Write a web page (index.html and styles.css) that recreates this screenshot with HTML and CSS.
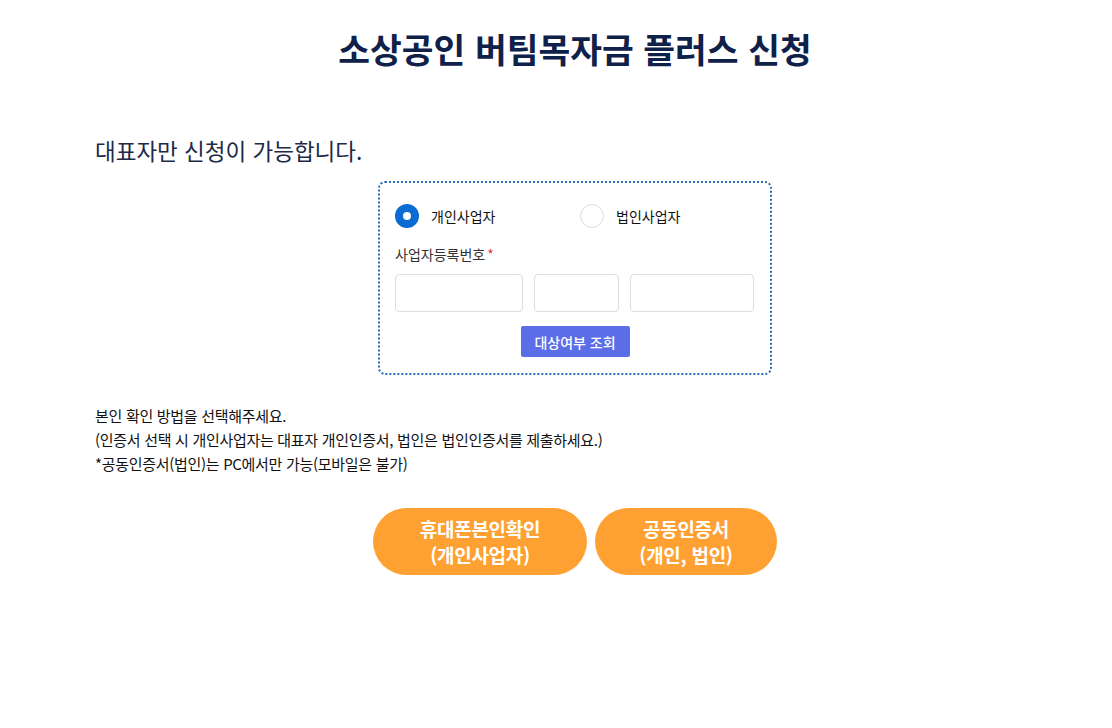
FILE: index.html
```html
<!DOCTYPE html>
<html lang="ko">
<head>
<meta charset="utf-8">
<link rel="stylesheet" href="styles.css">
</head>
<body>
<div class="page">
  <h1 class="title">소상공인 버팀목자금 플러스 신청</h1>
  <p class="notice">대표자만 신청이 가능합니다.</p>
  <div class="box">
    <div class="radios">
      <label class="radio"><span class="dot on"></span><span>개인사업자</span></label>
      <label class="radio"><span class="dot"></span><span>법인사업자</span></label>
    </div>
    <div class="field-label">사업자등록번호<span class="req">*</span></div>
    <div class="inputs">
      <span class="inp w1"></span>
      <span class="inp w2"></span>
      <span class="inp w3"></span>
    </div>
    <div class="btn-row"><button class="check-btn">대상여부 조회</button></div>
  </div>
  <div class="guide">
    <p>본인 확인 방법을 선택해주세요.</p>
    <p>(인증서 선택 시 개인사업자는 대표자 개인인증서, 법인은 법인인증서를 제출하세요.)</p>
    <p>*공동인증서(법인)는 PC에서만 가능(모바일은 불가)</p>
  </div>
  <div class="auth">
    <button class="pill p1">휴대폰본인확인<br>(개인사업자)</button>
    <button class="pill p2">공동인증서<br>(개인, 법인)</button>
  </div>
</div>
</body>
</html>
```

FILE: styles.css
```css
* { box-sizing: border-box; }
html, body { margin: 0; padding: 0; background: #fff; }
body { font-family: "Noto Sans CJK KR", "Noto Sans", sans-serif; color: #111; }
.page { width: 960px; margin-left: 95px; padding-top: 23px; }
.title { margin: 0; text-align: center; font-size: 34.5px; line-height: 50px; font-weight: 700; color: #0f2148; }
.notice { margin: 59px 0 0; font-size: 22.5px; line-height: 36px; color: #1c2a48; }
.box { width: 394px; margin: 13px auto 0; border: 2px dotted #2b69b0; border-radius: 7px; padding: 18px 15px 16px; }
.radios { display: grid; grid-template-columns: 1fr 1fr; column-gap: 10px; }
.radio { display: flex; align-items: center; gap: 12px; font-size: 14px; color: #111; height: 30px; }
.dot { width: 24px; height: 24px; border-radius: 50%; border: 1px solid #ddd; background: #fff; }
.dot.on { border: 8px solid #0b6bd4; }
.field-label { margin-top: 13px; font-size: 14px; color: #333; line-height: 20px; }
.req { color: #e03a3a; margin-left: 2px; }
.inputs { display: flex; gap: 11px; margin-top: 10px; }
.inp { height: 38px; border: 1px solid #ddd; border-radius: 4px; background: #fff; }
.w1 { width: 128px; } .w2 { width: 85px; } .w3 { width: 124px; }
.btn-row { display: flex; justify-content: center; margin-top: 14px; }
.check-btn { border: 0; background: #5b6ee8; color: #fff; font-family: inherit; font-size: 14px; font-weight: 500; width: 109px; height: 31px; border-radius: 2px; padding: 0; }
.guide { margin-top: 29px; font-size: 15px; line-height: 24px; color: #111; letter-spacing: -0.3px; }
.guide p { margin: 0; }
.auth { display: flex; justify-content: center; gap: 8px; margin-top: 32px; }
.pill { border: 0; background: #ffa033; color: #fff; font-family: inherit; font-weight: 700; font-size: 19px; line-height: 26px; letter-spacing: -0.3px; height: 67px; border-radius: 34px; padding: 0; }
.p1 { width: 214px; } .p2 { width: 182px; }
```
